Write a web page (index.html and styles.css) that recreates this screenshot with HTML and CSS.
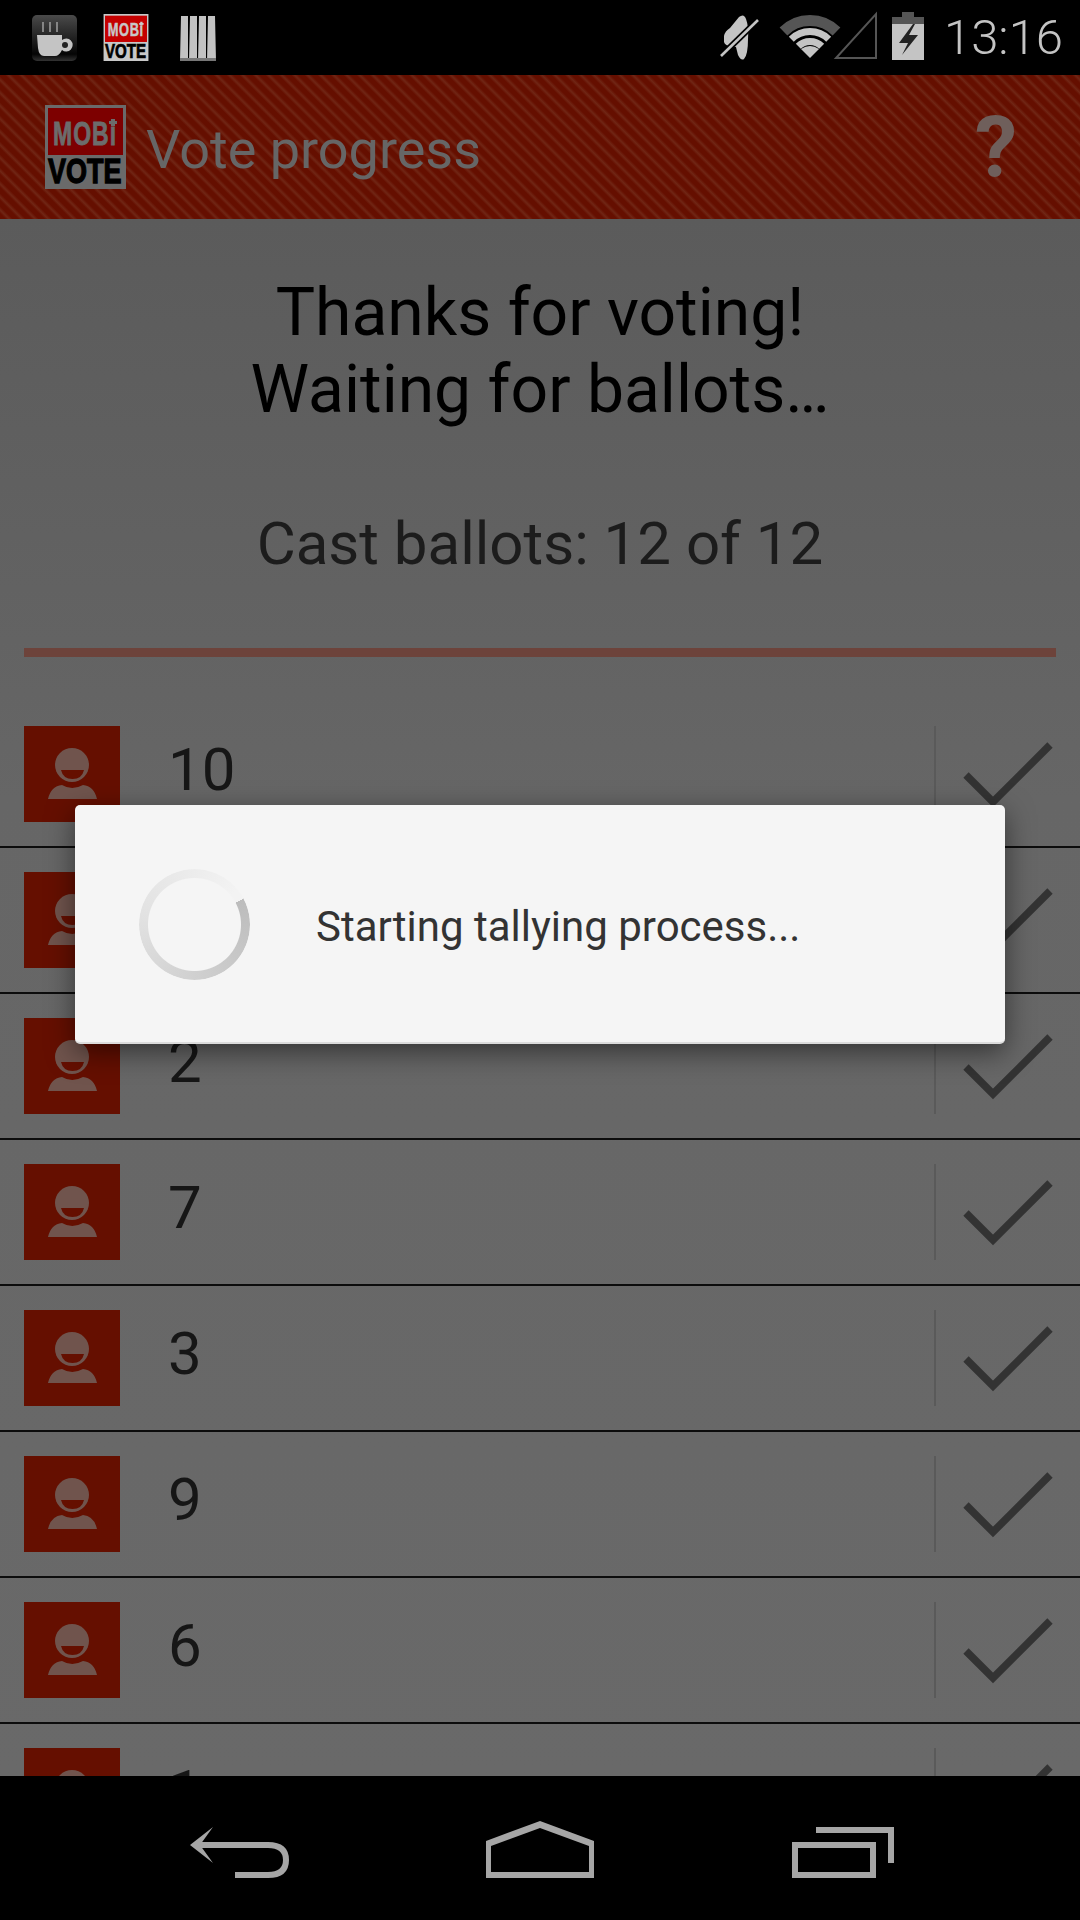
FILE: index.html
```html
<!DOCTYPE html>
<html>
<head>
	<meta charset="utf-8">
	<title>Vote progress</title>
	<link rel="stylesheet" href="styles.css">
</head>
<body>
<!-- shared icons -->
<svg class="defs" width="0" height="0">
	<symbol id="logo" viewBox="0 0 81 84">
		<rect class="logo-frame" width="81" height="84"/>
		<rect class="logo-panel" x="3" y="3" width="75" height="47"/>
		<text class="logo-mobi" transform="translate(8 40) scale(1 1.48)" font-size="23" letter-spacing="1">MOBi</text>
		<path class="logo-plus" d="M66 14h4v2h2v3h-2v2h-4v-2h-2v-3h2z"/>
		<text class="logo-vote" transform="translate(3 78) scale(1 1.29)" font-size="27">VOTE</text>
	</symbol>
	<symbol id="person" viewBox="0 0 96 96">
		<circle cx="48" cy="39" r="17" fill="#70544d"/>
		<path d="M37 44H60Q58 53 48.500 53 39 53 37 44z" fill="#650f00"/>
		<path d="M24 73Q27 60 38 59 48 65 59 59 70 60 73 73z" fill="#70544d"/>
	</symbol>
	<symbol id="tick" viewBox="0 0 144 96">
		<path d="M30 49 57 76 114 19" fill="none" stroke="#333" stroke-width="7.5"/>
	</symbol>
</svg>

<div class="phone">

	<div class="statusbar">
		<svg class="st-cup" width="45" height="46" viewBox="32 15 45 46">
			<defs>
				<linearGradient id="cupbg" x1="0" y1="0" x2="0" y2="1">
					<stop offset="0" stop-color="#4a4a4a"/>
					<stop offset="0.85" stop-color="#050505"/>
					<stop offset="1" stop-color="#333"/>
				</linearGradient>
			</defs>
			<rect x="32" y="15" width="45" height="46" rx="5" fill="url(#cupbg)"/>
			<path d="M43 22v10M50 22v10M57 22v10" stroke="#999" stroke-width="1.6"/>
			<path d="M37 35h25v5a6.5 6.5 0 1 1 0 10q-3 6-7 6h-11q-5 0-6-8z" fill="#c4c4c4"/>
			<circle cx="65" cy="45" r="3" fill="#222"/>
		</svg>
		<svg class="st-logo" viewBox="0 0 81 84"><use href="#logo"/></svg>
		<svg class="st-bars" width="36" height="46" viewBox="0 0 36 46">
			<path d="M1 1h7v45h-8zM10 1h7v45h-8zM19 1h7v45h-8zM28 1h7l1 45h-9z" fill="#c2c2c2"/>
			<path d="M0 43h36v3H0z" fill="#777"/>
		</svg>
		<div class="st-right">
			<svg width="212" height="75" viewBox="716 0 212 75">
				<path d="M724 36q1-5 6-8l9-11q5-4 7 2 3 8 2 20 0 16-4 20-3 2-6-4l-2-8-7-1q-4-1-5-4z" fill="#c4c4c4"/>
				<path d="M721 56 758 20" stroke="#000" stroke-width="6"/>
				<path d="M721 56 758 20" stroke="#c4c4c4" stroke-width="2.6"/>
				<path d="M783.500 31.500A37.500 37.500 0 0 1 836.500 31.500" fill="none" stroke="#555" stroke-width="11"/>
				<path d="M791.300 39.300A26.500 26.500 0 0 1 828.700 39.300" fill="none" stroke="#c4c4c4" stroke-width="7"/>
				<path d="M798.300 46.300A16.500 16.500 0 0 1 821.700 46.300" fill="none" stroke="#c4c4c4" stroke-width="7"/>
				<path d="M810 58 801 49q9-6 18 0z" fill="#c4c4c4"/>
				<path d="M876 14V58H836z" fill="none" stroke="#555" stroke-width="2"/>
				<path d="M902 12h12v5h10v43h-32V17h10z" fill="#c4c4c4"/>
				<path d="M902 12h12v5h10v7h-32v-7h10z" fill="#555"/>
				<path d="M913 24 899 43h9l-6 12 16-20h-9l6-11z" fill="#222"/>
			</svg>
			<span class="clock">13:16</span>
		</div>
	</div>

	<div class="appbar">
		<svg class="app-logo" viewBox="0 0 81 84"><use href="#logo"/></svg>
		<div class="app-title">Vote progress</div>
		<div class="app-help">?</div>
	</div>

	<div class="content">
		<div class="thanks">Thanks for voting!<br>Waiting for ballots…</div>
		<div class="cast">Cast ballots: 12 of 12</div>
		<div class="progress"></div>

		<div class="voter">
			<svg class="avatar" viewBox="0 0 96 96"><use href="#person"/></svg>
			<div class="voter-num">10</div>
			<svg class="tick" viewBox="0 0 144 96"><use href="#tick"/></svg>
		</div>
		<div class="voter">
			<svg class="avatar" viewBox="0 0 96 96"><use href="#person"/></svg>
			<div class="voter-num">5</div>
			<svg class="tick" viewBox="0 0 144 96"><use href="#tick"/></svg>
		</div>
		<div class="voter">
			<svg class="avatar" viewBox="0 0 96 96"><use href="#person"/></svg>
			<div class="voter-num">2</div>
			<svg class="tick" viewBox="0 0 144 96"><use href="#tick"/></svg>
		</div>
		<div class="voter">
			<svg class="avatar" viewBox="0 0 96 96"><use href="#person"/></svg>
			<div class="voter-num">7</div>
			<svg class="tick" viewBox="0 0 144 96"><use href="#tick"/></svg>
		</div>
		<div class="voter">
			<svg class="avatar" viewBox="0 0 96 96"><use href="#person"/></svg>
			<div class="voter-num">3</div>
			<svg class="tick" viewBox="0 0 144 96"><use href="#tick"/></svg>
		</div>
		<div class="voter">
			<svg class="avatar" viewBox="0 0 96 96"><use href="#person"/></svg>
			<div class="voter-num">9</div>
			<svg class="tick" viewBox="0 0 144 96"><use href="#tick"/></svg>
		</div>
		<div class="voter">
			<svg class="avatar" viewBox="0 0 96 96"><use href="#person"/></svg>
			<div class="voter-num">6</div>
			<svg class="tick" viewBox="0 0 144 96"><use href="#tick"/></svg>
		</div>
		<div class="voter">
			<svg class="avatar" viewBox="0 0 96 96"><use href="#person"/></svg>
			<div class="voter-num">1</div>
			<svg class="tick" viewBox="0 0 144 96"><use href="#tick"/></svg>
		</div>

		<div class="dialog">
			<div class="spinner"></div>
			<div class="dialog-text">Starting tallying process...</div>
		</div>
	</div>

	<div class="navbar">
		<svg width="1080" height="144" viewBox="0 1776 1080 144">
			<path d="M213 1827 190 1845 213 1863 200 1845z" fill="#a6a6a6"/>
			<path d="M197 1845h71q18 0 18 15t-18 15h-33" fill="none" stroke="#a6a6a6" stroke-width="6"/>
			<path fill-rule="evenodd" d="M540 1821 594 1841V1878H486V1841zM540 1828 491 1846V1872H589V1846z" fill="#a6a6a6"/>
			<path fill-rule="evenodd" d="M792 1842H876V1878H792zM798 1848V1872H870V1848z" fill="#a6a6a6"/>
			<path d="M816 1830H891V1863" fill="none" stroke="#a6a6a6" stroke-width="6"/>
		</svg>
	</div>
</div>
</body>
</html>
```

FILE: styles.css
```css
html, body {
	margin: 0;
	padding: 0;
	background: #000;
}

.phone {
	width: 1080px;
	height: 1920px;
	display: flex;
	flex-direction: column;
	overflow: hidden;
	font-family: Roboto, "Noto Sans", sans-serif;
}

.defs {
	position: absolute;
	left: 0;
	top: 0;
}

/* status bar */
.statusbar {
	height: 75px;
	flex: none;
	background: #000;
	display: flex;
	align-items: flex-start;
}

.st-cup {
	margin: 15px 0 0 32px;
}

.st-logo {
	width: 46px;
	height: 47px;
	margin: 14px 0 0 26px;
	--logo-frame: #c8c8c8;
	--logo-panel: #c40000;
	--logo-word: #c8c8c8;
}

.st-bars {
	margin: 15px 0 0 31px;
}

.st-right {
	margin-left: auto;
	display: flex;
	align-items: flex-start;
}

.clock {
	font-size: 49px;
	font-weight: 300;
	line-height: 75px;
	color: #c4c4c4;
	width: 152px;
	padding-left: 16px;
	box-sizing: border-box;
}

/* logo parts, coloured by whichever svg uses it */
.logo-frame {
	fill: var(--logo-frame);
}

.logo-panel {
	fill: var(--logo-panel);
}

.logo-mobi, .logo-vote {
	font-family: "Liberation Sans", sans-serif;
	font-weight: bold;
}

.logo-mobi {
	fill: var(--logo-word);
	stroke: var(--logo-word);
	stroke-width: 0.6;
}

.logo-plus {
	fill: var(--logo-word);
}

.logo-vote {
	fill: #000;
	stroke: #000;
	stroke-width: 1;
}

/* action bar */
.appbar {
	height: 144px;
	flex: none;
	display: flex;
	align-items: center;
	background: repeating-linear-gradient(45deg, #650f00 0, #650f00 4px, #702615 6.500px, #650f00 9.200px);
}

.app-logo {
	width: 81px;
	height: 84px;
	margin-left: 45px;
	--logo-frame: #6a6a6a;
	--logo-panel: #7d0000;
	--logo-word: #6c6c6c;
}

.app-title {
	margin: 4px 0 0 20px;
	font-size: 54px;
	color: #666;
}

.app-help {
	margin: 2px 63px 0 auto;
	font-size: 85px;
	font-weight: bold;
	color: #6f5f5b;
	line-height: 100px;
}

/* main area */
.content {
	flex: 1;
	position: relative;
	overflow: hidden;
	background: linear-gradient(#5b5b5b 0, #666 580px, #696969 100%);
}

.thanks {
	padding-top: 55px;
	font-size: 66px;
	line-height: 77px;
	text-align: center;
	color: #000;
}

.cast {
	margin-top: 81px;
	font-size: 60px;
	line-height: 70px;
	text-align: center;
	color: #1c1c1c;
}

.progress {
	height: 9px;
	margin: 69px 24px 45px;
	background: #6d433b;
}

.voter {
	height: 96px;
	padding: 24px 0;
	border-bottom: 2px solid #0c0c0c;
	display: flex;
	align-items: flex-start;
}

.avatar {
	width: 96px;
	height: 96px;
	margin-left: 24px;
	background: #650f00;
}

.voter-num {
	flex: 1;
	margin-left: 48px;
	padding-top: 9px;
	font-size: 60px;
	line-height: 70px;
	color: #161616;
}

.tick {
	width: 144px;
	height: 96px;
	border-left: 2px solid #5a5a5a;
}

/* progress dialog */
.dialog {
	position: absolute;
	left: 75px;
	top: 586px;
	width: 930px;
	height: 239px;
	box-sizing: border-box;
	display: flex;
	align-items: center;
	background: #f5f5f5;
	border-radius: 5px;
	border-bottom: 2px solid #dcdcdc;
	box-shadow: 0 8px 28px rgba(0, 0, 0, 0.5);
}

.spinner {
	width: 111px;
	height: 111px;
	margin: 2px 0 0 64px;
	border-radius: 50%;
	background: conic-gradient(from 62deg, #bcbcbc, #d2d2d2 130deg, #e2e2e2 220deg, #f3f3f3 350deg);
	-webkit-mask: radial-gradient(circle, transparent 46px, #000 47px);
	mask: radial-gradient(circle, transparent 46px, #000 47px);
}

.dialog-text {
	margin: 6px 0 0 66px;
	font-size: 42px;
	color: #333;
}

/* nav bar */
.navbar {
	height: 144px;
	flex: none;
	background: #000;
}

.navbar svg {
	display: block;
}
```
